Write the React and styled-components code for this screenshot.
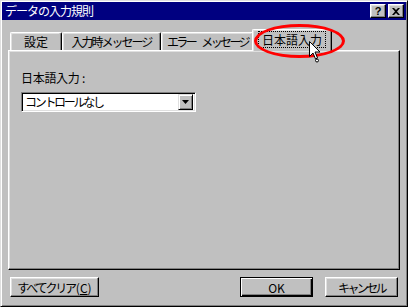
import React from 'react';
import styled, { createGlobalStyle } from 'styled-components';

const GlobalStyle = createGlobalStyle`
    html, body {
        margin: 0;
        padding: 0;
        background: #c0c0c0;
    }
    * {
        box-sizing: border-box;
    }
`;

// kana in the old UI font are narrower than kanji, so each tab gets its own spacing
const tabs = [
    { label: '設定', width: 52, spacing: 0 },
    { label: '入力時メッセージ', width: 99, spacing: -2 },
    { label: 'エラー メッセージ', width: 93, spacing: -2.6 },
    { label: '日本語入力', width: 80, spacing: 0, active: true },
];

const App = () => {
    return (
        <>
            <GlobalStyle />
            <Window>
                <TitleBar>
                    <TitleText>データの入力規則</TitleText>
                    <TitleButtons>
                        <TitleButton>?</TitleButton>
                        <TitleButton>
                            <svg width="8" height="7" viewBox="0 0 8 7">
                                <path d="M0 0h2l2 2 2-2h2L5 3.5 8 7H6L4 5 2 7H0l3-3.5z" fill="#000" />
                            </svg>
                        </TitleButton>
                    </TitleButtons>
                </TitleBar>

                <Content>
                    <TabRow>
                        {tabs.map((t) => (
                            <Tab key={t.label} $width={t.width} $spacing={t.spacing} $active={t.active}>
                                {t.active ? <FocusText>{t.label}</FocusText> : t.label}
                            </Tab>
                        ))}
                    </TabRow>

                    <Panel>
                        <FieldLabel>日本語入力 :</FieldLabel>
                        <SelectBox>
                            <SelectText>コントロールなし</SelectText>
                            <DropButton>
                                <svg width="7" height="4" viewBox="0 0 7 4">
                                    <path d="M0 0h7L3.5 4z" fill="#000" />
                                </svg>
                            </DropButton>
                        </SelectBox>
                    </Panel>

                    <Footer>
                        <Button $width={89} $spacing={-2.2}>
                            すべてクリア<Mnemonic>(<u>C</u>)</Mnemonic>
                        </Button>
                        <ButtonGroup>
                            <Button $width={73} $default>OK</Button>
                            <Button $width={73} $spacing={-2.6}>キャンセル</Button>
                        </ButtonGroup>
                    </Footer>
                </Content>

                <Highlight />
                <Cursor width="14" height="22" viewBox="0 0 14 22">
                    <path d="M0.5 0.5v15l3.5-3.5 2.5 6 2-1-2.5-6h5z" fill="#fff" stroke="#000" strokeWidth="1" />
                    <circle cx="8" cy="19.5" r="1.5" fill="#fff" stroke="#000" strokeWidth="1" />
                </Cursor>
            </Window>
        </>
    );
};

const Window = styled.div`
    position: relative;
    width: 408px;
    height: 307px;
    padding: 1px;
    display: flex;
    flex-direction: column;
    background: #c0c0c0;
    border: 1px solid;
    border-color: #dfdfdf #000 #000 #dfdfdf;
    box-shadow: inset 1px 1px #fff, inset -1px -1px #808080;
    font-family: "Noto Sans CJK JP", "Liberation Sans", sans-serif;
    font-size: 12px;
    color: #000;
    overflow: hidden;
`;

const TitleBar = styled.div`
    height: 18px;
    background: #000080;
    display: flex;
    align-items: center;
    justify-content: space-between;
    padding: 0 2px 0 3px;
`;

const TitleText = styled.span`
    color: #fff;
    font-size: 12px;
    letter-spacing: -1px;
    line-height: 18px;
`;

const TitleButtons = styled.div`
    display: flex;
    gap: 2px;
`;

const TitleButton = styled.div`
    width: 16px;
    height: 14px;
    background: #c0c0c0;
    border: 1px solid;
    border-color: #fff #000 #000 #fff;
    box-shadow: inset -1px -1px #808080, inset 1px 1px #dfdfdf;
    display: flex;
    align-items: center;
    justify-content: center;
    font-family: "Liberation Sans", sans-serif;
    font-weight: 700;
    font-size: 11px;
    line-height: 1;
`;

const Content = styled.div`
    flex: 1;
    display: flex;
    flex-direction: column;
    padding: 0 6px;
`;

const TabRow = styled.div`
    margin-top: 9px;
    height: 21px;
    display: flex;
    align-items: flex-end;
    padding-left: 2px;
    position: relative;
    z-index: 1;
`;

const Tab = styled.div`
    position: relative;
    width: ${(p) => p.$width}px;
    height: ${(p) => (p.$active ? 22 : 18)}px;
    margin-left: ${(p) => (p.$active ? -2 : 0)}px;
    margin-bottom: ${(p) => (p.$active ? -1 : 0)}px;
    background: #c0c0c0;
    border-top: 1px solid #fff;
    border-left: 1px solid #fff;
    border-right: 1px solid #000;
    border-radius: 2px 2px 0 0;
    box-shadow: inset -1px 0 #808080, inset 1px 1px #dfdfdf;
    display: flex;
    align-items: ${(p) => (p.$active ? 'flex-start' : 'center')};
    justify-content: center;
    padding-top: ${(p) => (p.$active ? 2 : 0)}px;
    font-size: 12px;
    letter-spacing: ${(p) => p.$spacing}px;
    word-spacing: 6px;
    white-space: pre;
`;

const FocusText = styled.span`
    outline: 1px dotted #000;
    padding: 0 3px;
    line-height: 15px;
`;

const Panel = styled.div`
    height: 220px;
    border: 1px solid;
    border-color: #fff #000 #000 #fff;
    box-shadow: inset -1px -1px #808080, inset 1px 1px #dfdfdf;
    padding: 20px 12px 0;
    display: flex;
    flex-direction: column;
    align-items: flex-start;
`;

const FieldLabel = styled.div`
    line-height: 14px;
    letter-spacing: -0.3px;
`;

const SelectBox = styled.div`
    margin-top: 7px;
    width: 175px;
    height: 20px;
    background: #fff;
    border: 1px solid;
    border-color: #808080 #fff #fff #808080;
    box-shadow: inset 1px 1px #000, inset -1px -1px #dfdfdf;
    display: flex;
    align-items: center;
    justify-content: space-between;
    padding: 2px 2px 2px 3px;
`;

const SelectText = styled.span`
    font-size: 12px;
    letter-spacing: -2.3px;
    line-height: 14px;
`;

const DropButton = styled.div`
    width: 15px;
    height: 16px;
    background: #c0c0c0;
    border: 1px solid;
    border-color: #dfdfdf #000 #000 #dfdfdf;
    box-shadow: inset 1px 1px #fff, inset -1px -1px #808080;
    display: flex;
    align-items: center;
    justify-content: center;
`;

const Footer = styled.div`
    margin-top: 7px;
    display: flex;
    justify-content: space-between;
    padding: 0 2px;
`;

const ButtonGroup = styled.div`
    display: flex;
    gap: 12px;
`;

const Button = styled.div`
    width: ${(p) => p.$width}px;
    height: 20px;
    background: #c0c0c0;
    border: 1px solid;
    border-color: ${(p) => (p.$default ? '#000' : '#fff #000 #000 #fff')};
    box-shadow: ${(p) =>
        p.$default
            ? 'inset 1px 1px #fff, inset -1px -1px #000, inset -2px -2px #808080'
            : 'inset -1px -1px #808080, inset 1px 1px #dfdfdf'};
    display: flex;
    align-items: center;
    justify-content: center;
    font-size: 12px;
    letter-spacing: ${(p) => p.$spacing || 0}px;
    white-space: nowrap;

    u {
        text-underline-offset: 1px;
    }
`;

const Mnemonic = styled.span`
    letter-spacing: 0;
    margin-left: 1px;
`;

const Highlight = styled.div`
    position: absolute;
    left: 253px;
    top: 23px;
    width: 91px;
    height: 34px;
    border: 3px solid #ff0000;
    border-radius: 50%;
    pointer-events: none;
    z-index: 2;
`;

const Cursor = styled.svg`
    position: absolute;
    left: 308px;
    top: 40px;
    z-index: 3;
`;

export default App;
